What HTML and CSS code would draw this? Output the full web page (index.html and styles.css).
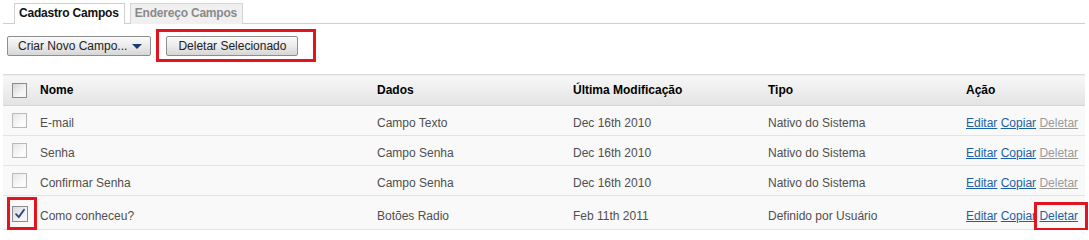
FILE: index.html
```html
<!DOCTYPE html>
<html lang="pt">
<head>
<meta charset="utf-8">
<title>Cadastro Campos</title>
<link rel="stylesheet" href="styles.css">
</head>
<body>
<div class="page">
  <div class="tabs">
    <div class="tab active">Cadastro Campos</div>
    <div class="tab">Endereço Campos</div>
  </div>
  <div class="toolbar">
    <button class="btn">Criar Novo Campo... <span class="caret"></span></button>
    <div class="mark-box">
      <button class="btn">Deletar Selecionado</button>
    </div>
  </div>
  <table class="grid">
    <colgroup>
      <col class="c-check"><col class="c-nome"><col class="c-dados"><col class="c-mod"><col class="c-tipo"><col class="c-acao">
    </colgroup>
    <thead>
      <tr>
        <th class="chk"><span class="cb cb-head"></span></th>
        <th>Nome</th>
        <th>Dados</th>
        <th>Última Modificação</th>
        <th>Tipo</th>
        <th>Ação</th>
      </tr>
    </thead>
    <tbody>
      <tr>
        <td class="chk"><span class="cb"></span></td>
        <td>E-mail</td>
        <td>Campo Texto</td>
        <td>Dec 16th 2010</td>
        <td>Nativo do Sistema</td>
        <td class="acts"><a href="#">Editar</a> <a href="#">Copiar</a> <a href="#" class="off">Deletar</a></td>
      </tr>
      <tr>
        <td class="chk"><span class="cb"></span></td>
        <td>Senha</td>
        <td>Campo Senha</td>
        <td>Dec 16th 2010</td>
        <td>Nativo do Sistema</td>
        <td class="acts"><a href="#">Editar</a> <a href="#">Copiar</a> <a href="#" class="off">Deletar</a></td>
      </tr>
      <tr>
        <td class="chk"><span class="cb"></span></td>
        <td>Confirmar Senha</td>
        <td>Campo Senha</td>
        <td>Dec 16th 2010</td>
        <td>Nativo do Sistema</td>
        <td class="acts"><a href="#">Editar</a> <a href="#">Copiar</a> <a href="#" class="off">Deletar</a></td>
      </tr>
      <tr class="tall">
        <td class="chk"><span class="cb cb-on"><svg viewBox="0 0 16 16" width="14" height="14"><path d="M3.5 8.2 L6.6 11.6 L12.6 3.2" fill="none" stroke="#2c4b8c" stroke-width="2.2" stroke-linecap="round" stroke-linejoin="round"/></svg></span><span class="annot annot-cb"></span></td>
        <td>Como conheceu?</td>
        <td>Botões Radio</td>
        <td>Feb 11th 2011</td>
        <td>Definido por Usuário</td>
        <td class="acts"><a href="#">Editar</a> <a href="#">Copiar</a> <span class="mark-link"><a href="#">Deletar</a><span class="annot annot-link"></span></span></td>
      </tr>
    </tbody>
  </table>
</div>
</body>
</html>
```

FILE: styles.css
```css
* { box-sizing: border-box; }

body {
  margin: 0;
  background: #fff;
  font-family: "Liberation Sans", Arial, sans-serif;
  font-size: 12px;
  color: #4f4f4f;
}

.page {
  padding: 3px 4px 0 3px;
}

/* Tabs */
.tabs {
  display: flex;
  gap: 5px;
  padding-left: 11px;
  border-bottom: 1px solid #cfcfcf;
  height: 21px;
}

.tab {
  height: 21px;
  padding: 0 5px 0 4px;
  line-height: 19px;
  font-weight: bold;
  color: #8a8a8a;
  background: #f0f0f0;
  border: 1px solid #d4d4d4;
  border-bottom: none;
  letter-spacing: -0.2px;
}

.tab.active {
  color: #111;
  background: #fff;
  border-color: #cfcfcf;
  position: relative;
  z-index: 1;
}

/* Toolbar */
.toolbar {
  display: flex;
  align-items: center;
  margin-top: 5px;
  padding-left: 4px;
}

.btn {
  height: 20px;
  padding: 0 8px 0 10px;
  font-family: "Liberation Sans", Arial, sans-serif;
  font-size: 12px;
  color: #222;
  border: 1px solid #8e8e8e;
  border-radius: 2px;
  background: linear-gradient(#fafafa, #e9e9e9 55%, #d6d6d6);
  display: inline-flex;
  align-items: center;
  gap: 5px;
}

.caret {
  width: 0;
  height: 0;
  border-left: 5px solid transparent;
  border-right: 5px solid transparent;
  border-top: 5px solid #1c3a72;
  margin-top: 1px;
}

.mark-box {
  margin-left: 5px;
  border: 3px solid #e3141d;
  padding: 4px 15px 3px 7px;
  display: flex;
}

.mark-box .btn {
  padding: 0 11px;
}

/* Table */
.grid {
  margin-top: 12px;
  width: 100%;
  border-collapse: collapse;
  table-layout: fixed;
  border-top: 1px solid #dcdcdc;
}

.c-check { width: 33px; }
.c-nome { width: 337px; }
.c-dados { width: 196px; }
.c-mod { width: 195px; }
.c-tipo { width: 198px; }
.c-acao { width: auto; }

.grid th {
  height: 31px;
  text-align: left;
  font-weight: bold;
  color: #000;
  padding: 0 4px;
  background: linear-gradient(#f7f7f7, #e3e3e3);
  border-bottom: 1px solid #d6d6d6;
}

.grid td {
  height: 30px;
  padding: 5px 4px 0;
  background: #f9f9f9;
  border-bottom: 1px solid #e4e4e4;
  white-space: nowrap;
}

.grid tr.tall td {
  height: 34px;
  padding-top: 6px;
}

.grid .chk,
.grid tr.tall .chk {
  padding: 0 0 0 9px;
  position: relative;
}

.grid tr.tall .chk {
  padding-top: 3px;
}

.cb {
  display: block;
  width: 15px;
  height: 15px;
  border: 1px solid #b9b9b9;
  background: linear-gradient(135deg, #e6e6e6, #fbfbfb 70%);
}

.cb-head {
  border-color: #8c8c8c;
  background: linear-gradient(135deg, #d6d6d6, #f6f6f6 70%);
}

.cb-on {
  width: 16px;
  height: 16px;
  border-color: #8c8c8c;
  background: linear-gradient(135deg, #dadada, #f6f6f6 70%);
  display: flex;
  align-items: center;
  justify-content: center;
}

.acts a {
  color: #1b5fa8;
  text-decoration: underline;
}

.acts a.off {
  color: #9a9a9a;
}

.mark-link {
  position: relative;
}

.annot {
  position: absolute;
  border: 3px solid #e3141d;
  pointer-events: none;
}

.annot-cb {
  left: 4px;
  top: 1px;
  width: 30px;
  height: 33px;
}

.annot-link {
  left: -5px;
  top: -7px;
  width: 54px;
  height: 29px;
}
```
